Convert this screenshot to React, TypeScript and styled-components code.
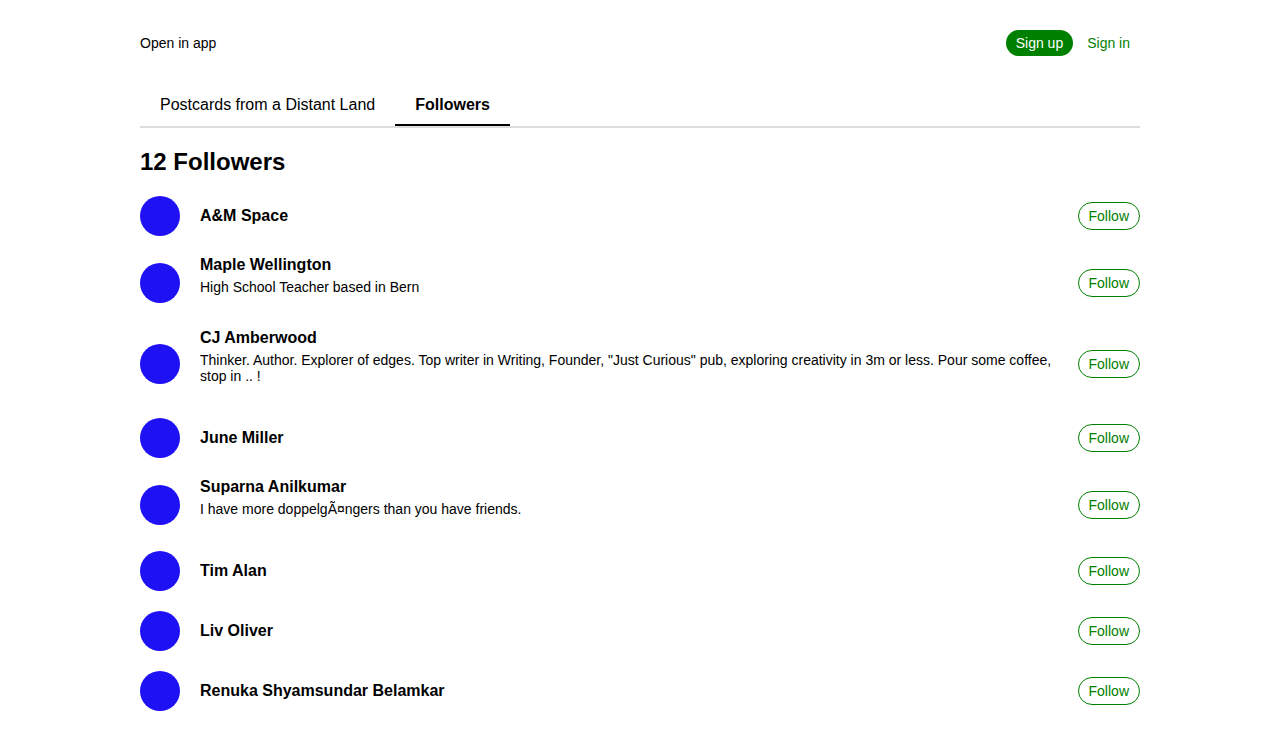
import React from "react";
import styled, { createGlobalStyle } from "styled-components";

type Follower = {
  name: string;
  bio?: string;
};

const followers: Follower[] = [
  { name: "A&M Space" },
  { name: "Maple Wellington", bio: "High School Teacher based in Bern" },
  {
    name: "CJ Amberwood",
    bio: 'Thinker. Author. Explorer of edges. Top writer in Writing, Founder, "Just Curious" pub, exploring creativity in 3m or less. Pour some coffee, stop in .. !',
  },
  { name: "June Miller" },
  {
    name: "Suparna Anilkumar",
    bio: "I have more doppelgÃ¤ngers than you have friends.",
  },
  { name: "Tim Alan" },
  { name: "Liv Oliver" },
  { name: "Renuka Shyamsundar Belamkar" },
];

const GlobalStyle = createGlobalStyle`
  body {
    margin: 0;
    background: #fff;
    color: #000;
    font-family: "Liberation Sans", Arial, sans-serif;
  }
`;

const Page = styled.div`
  width: 1000px;
  margin: 0 auto;
`;

const Header = styled.header`
  display: flex;
  align-items: center;
  justify-content: space-between;
  height: 26px;
  padding: 30px 0 25px;
  font-size: 14px;
`;

const Actions = styled.div`
  display: flex;
  align-items: center;
  gap: 4px;
`;

const SignUp = styled.button`
  font: inherit;
  font-size: 14px;
  height: 26px;
  padding: 0 10px;
  border: none;
  border-radius: 13px;
  background: #008000;
  color: #fff;
`;

const SignIn = styled.button`
  font: inherit;
  font-size: 14px;
  padding: 0 10px;
  border: none;
  background: none;
  color: #008000;
`;

const Tabs = styled.nav`
  display: flex;
  border-bottom: 2px solid #dcdcdc;
`;

const Tab = styled.div<{ $active?: boolean }>`
  padding: 15px 20px 10px;
  line-height: 18px;
  font-size: 16px;
  font-weight: ${(p) => (p.$active ? 700 : 400)};
  border-bottom: 2px solid ${(p) => (p.$active ? "#000" : "transparent")};
`;

const Title = styled.h1`
  font-size: 24px;
  font-weight: 700;
  line-height: 28px;
  margin: 20px 0;
`;

const List = styled.div`
  display: flex;
  flex-direction: column;
  gap: 20px;
`;

const Row = styled.div`
  display: flex;
  align-items: center;
  gap: 20px;
`;

const Avatar = styled.div`
  width: 40px;
  height: 40px;
  border-radius: 50%;
  background: #1e12f5;
  flex-shrink: 0;
`;

const Info = styled.div`
  flex: 1;
  min-width: 0;
`;

const Name = styled.div`
  font-size: 16px;
  font-weight: 700;
  line-height: 18px;
`;

const Bio = styled.p`
  font-size: 14px;
  line-height: 16px;
  margin: 5px 0 14px;
`;

const FollowButton = styled.button`
  font: inherit;
  font-size: 14px;
  line-height: 16px;
  padding: 5px 10px;
  border: 1px solid #008000;
  border-radius: 14px;
  background: #fff;
  color: #008000;
  flex-shrink: 0;
`;

export default function App() {
  return (
    <>
      <GlobalStyle />
      <Page>
        <Header>
          <span>Open in app</span>
          <Actions>
            <SignUp>Sign up</SignUp>
            <SignIn>Sign in</SignIn>
          </Actions>
        </Header>
        <Tabs>
          <Tab>Postcards from a Distant Land</Tab>
          <Tab $active>Followers</Tab>
        </Tabs>
        <Title>12 Followers</Title>
        <List>
          {followers.map((f) => (
            <Row key={f.name}>
              <Avatar />
              <Info>
                <Name>{f.name}</Name>
                {f.bio && <Bio>{f.bio}</Bio>}
              </Info>
              <FollowButton>Follow</FollowButton>
            </Row>
          ))}
        </List>
      </Page>
    </>
  );
}
